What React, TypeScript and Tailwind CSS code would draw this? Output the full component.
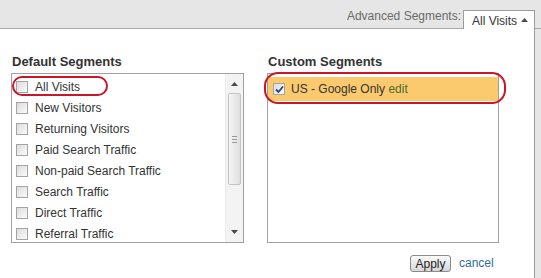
import React from "react";

const defaultSegments = [
  "All Visits",
  "New Visitors",
  "Returning Visitors",
  "Paid Search Traffic",
  "Non-paid Search Traffic",
  "Search Traffic",
  "Direct Traffic",
  "Referral Traffic",
];

function Checkbox({ checked = false }: { checked?: boolean }) {
  return (
    <span className="w-[12px] h-[12px] shrink-0 border border-[#a4a4a4] bg-gradient-to-br from-[#dcdcdc] to-[#fbfbfb] flex items-center justify-center">
      {checked && (
        <svg width="9" height="9" viewBox="0 0 9 9">
          <path d="M1 4.5 L3.5 7 L8 1.5" fill="none" stroke="#23418a" strokeWidth="1.8" />
        </svg>
      )}
    </span>
  );
}

function Arrow({ up }: { up?: boolean }) {
  return (
    <svg width="7" height="4" viewBox="0 0 7 4">
      <path d={up ? "M0 4 L3.5 0 L7 4 Z" : "M0 0 L3.5 4 L7 0 Z"} fill="#4a4a4a" />
    </svg>
  );
}

function Scrollbar() {
  return (
    <div className="w-[18px] h-full bg-[#f3f3f3] border-l border-[#ececec] flex flex-col items-center">
      <div className="h-[17px] w-full flex items-center justify-center pt-[2px]">
        <Arrow up />
      </div>
      <div className="mt-[2px] w-[13px] h-[92px] rounded-[2px] border border-[#c4c4c4] bg-gradient-to-r from-[#f6f6f6] to-[#dedede] flex flex-col items-center justify-center gap-[2px]">
        <span className="w-[5px] h-px bg-[#9a9a9a]" />
        <span className="w-[5px] h-px bg-[#9a9a9a]" />
        <span className="w-[5px] h-px bg-[#9a9a9a]" />
      </div>
      <div className="mt-auto h-[17px] w-full flex items-center justify-center pb-[4px]">
        <Arrow />
      </div>
    </div>
  );
}

export default function App() {
  return (
    <div className="w-[541px] h-[278px] bg-[#e6e6e6] flex flex-col overflow-hidden font-['Liberation_Sans',Arial,sans-serif] text-[12px] text-[#333]">
      {/* top bar with the segments tab */}
      <div className="h-[29px] shrink-0 border-b border-[#a9a9a9] flex items-end justify-end pr-[6px]">
        <span className="text-[#6a6a6a] mb-[5px] mr-[2px] leading-[14px]">Advanced Segments:</span>
        <div className="-mb-px h-[19px] w-[72px] bg-white border border-b-0 border-[#9c9c9c] flex items-center pl-[8px] pr-[6px]">
          <span className="leading-[14px] pt-[1px]">All Visits</span>
          <span className="ml-auto mb-[1px]">
            <Arrow up />
          </span>
        </div>
      </div>

      <div className="flex-1 flex">
        <div className="relative w-[535px] bg-white border-r border-[#9c9c9c] flex pl-[11px] pt-[25px]">
          {/* Default segments */}
          <div className="w-[233px] flex flex-col">
            <h3 className="font-bold text-[13px] leading-[16px] pl-px mb-[3px]">Default Segments</h3>
            <div className="h-[170px] border border-[#a0a0a0] flex overflow-hidden">
              <ul className="flex-1 pt-[2px]">
                {defaultSegments.map((s) => (
                  <li key={s} className="h-[21px] flex items-center pl-[4px]">
                    <Checkbox />
                    <span className="ml-[7px] leading-[14px]">{s}</span>
                  </li>
                ))}
              </ul>
              <Scrollbar />
            </div>
          </div>

          {/* Custom segments */}
          <div className="ml-[23px] w-[232px] flex flex-col">
            <h3 className="font-bold text-[13px] leading-[16px] pl-px mb-[3px]">Custom Segments</h3>
            <div className="h-[170px] border border-[#a0a0a0] pt-[3px]">
              <div className="h-[24px] bg-[#fcca6e] flex items-center pl-[5px]">
                <Checkbox checked />
                <span className="ml-[6px] leading-[14px]">
                  US - Google Only <span className="text-[#4e6a2f]">edit</span>
                </span>
              </div>
            </div>
            <div className="mt-[12px] flex items-center pl-[143px]">
              <button className="w-[41px] h-[17px] rounded-[3px] border border-[#8a8a8a] bg-gradient-to-b from-[#fbfbfb] to-[#d6d6d6] text-[12px] leading-[14px] text-[#222]">
                Apply
              </button>
              <a className="ml-[8px] text-[#2f6c9c] leading-[14px] mb-[1px]">cancel</a>
            </div>
          </div>

          {/* red highlight ovals */}
          <div className="absolute left-[12px] top-[47px] w-[96px] h-[20px] rounded-[11px] border-2 border-[#c8162a]" />
          <div className="absolute left-[264px] top-[43px] w-[242px] h-[32px] rounded-[14px] border-2 border-[#c8162a]" />
        </div>
      </div>
    </div>
  );
}
